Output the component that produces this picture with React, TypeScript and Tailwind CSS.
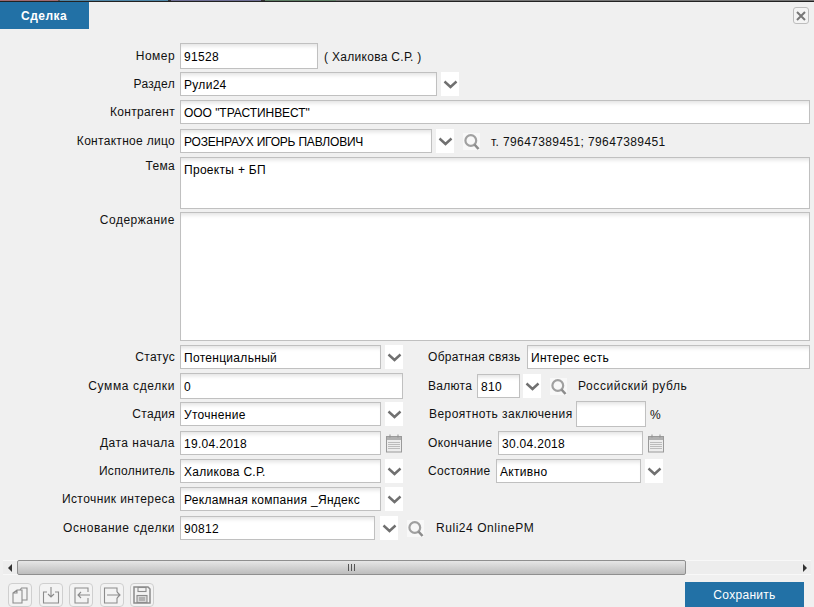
import React from "react";

const inputBase =
  "h-full border border-[#c0c0c0] bg-white shadow-[inset_0_5px_4px_-3px_#e2e2e2] pl-[3px] text-[12px] tracking-[0.3px] leading-none text-black flex items-center whitespace-nowrap overflow-hidden shrink-0";

function Field({ w, children, className = "" }: { w?: string; children?: React.ReactNode; className?: string }) {
  return (
    <div className={`${inputBase} ${w ?? ""} ${className}`}>
      <span className="relative top-[1px]">{children}</span>
    </div>
  );
}

function Chevron({ className = "" }: { className?: string }) {
  return (
    <div className={`h-full w-[18px] bg-white flex items-center justify-center shrink-0 ${className}`}>
      <svg width="15" height="9" viewBox="0 0 15 9" fill="none">
        <path d="M1.5 1.5 L7.5 7 L13.5 1.5" stroke="#707070" strokeWidth="2.4" />
      </svg>
    </div>
  );
}

function Search({ className = "" }: { className?: string }) {
  return (
    <div className={`w-[17px] h-[17px] bg-[#f8f8f8] shrink-0 ${className}`}>
      <svg width="17" height="17" viewBox="0 0 17 17" fill="none">
        <circle cx="7.8" cy="7.5" r="5.4" stroke="#a0a0a0" strokeWidth="2.2" />
        <path d="M11.5 11.5 L15.5 16" stroke="#8c8c8c" strokeWidth="2.6" />
      </svg>
    </div>
  );
}

function Calendar({ className = "" }: { className?: string }) {
  return (
    <svg className={`shrink-0 ${className}`} width="18" height="19" viewBox="0 0 18 19" fill="none">
      <rect x="1.5" y="2.5" width="15" height="15.5" fill="#ededed" stroke="#9a9a9a" />
      <rect x="2" y="3" width="14" height="3" fill="#b0b0b0" />
      <path d="M5 0.5v3M13 0.5v3" stroke="#8f8f8f" />
      <path d="M3.5 8.5h11M3.5 10.5h11M3.5 12.5h11M3.5 14.5h11" stroke="#8a8a8a" strokeDasharray="1 1" />
    </svg>
  );
}

function Label({ children, w = "w-[175px]", className = "" }: { children: React.ReactNode; w?: string; className?: string }) {
  return <div className={`${w} text-right shrink-0 whitespace-nowrap text-[12px] tracking-[0.3px] text-[#111] ${className}`}>{children}</div>;
}

function Tool({ children }: { children: React.ReactNode }) {
  return (
    <div className="w-[24px] h-[24px] border border-[#cfcfcf] rounded-[4px] bg-[#f3f3f3] flex items-center justify-center">
      <svg width="20" height="20" viewBox="0 0 20 20" fill="none" stroke="#8c8c8c" strokeWidth="1.1">
        {children}
      </svg>
    </div>
  );
}

const Note = ({ children, className = "" }: { children: React.ReactNode; className?: string }) => (
  <span className={`text-[#111] whitespace-nowrap ${className}`}>{children}</span>
);

export default function App() {
  return (
    <div className="w-[814px] h-[607px] overflow-hidden bg-[#f0f0f0] flex flex-col text-[12px] [font-family:'Liberation_Sans',Arial,sans-serif]">
      <div className="h-[2px] bg-[#222] shrink-0 flex items-start">
        <div className="h-px w-[58px] bg-[#a06a70]" />
        <div className="h-px w-[2px] bg-[#555]" />
        <div className="h-px w-[108px] bg-[#4f87a8]" />
        <div className="h-px w-[3px] bg-[#333]" />
        <div className="h-px w-[90px] bg-[#6f6f96]" />
        <div className="h-px w-[4px] bg-[#333]" />
        <div className="h-px w-[71px] bg-[#5f7f66]" />
        <div className="h-px flex-1 bg-[#777]" />
      </div>
      <div className="h-[27px] flex items-start justify-between shrink-0">
        <div className="w-[89px] h-[27px] bg-[#2271a6] text-white font-bold text-[12px] tracking-[0.5px] flex items-center pl-[21px]">Сделка</div>
        <div className="mt-[5px] mr-[5px] w-[16px] h-[17px] border border-[#bdbdbd] rounded-[3px] bg-[#f4f4f4] flex items-center justify-center">
          <svg width="10" height="10" viewBox="0 0 10 10"><path d="M1 1 L9 9 M9 1 L1 9" stroke="#777" strokeWidth="2" /></svg>
        </div>
      </div>

      <div className="flex flex-col shrink-0">
        <div className="flex items-center h-[26px] mt-[14px] gap-[5px]">
          <Label className="!tracking-[0.45px]">Номер</Label>
          <Field w="w-[138px]">91528</Field>
          <Note className="ml-[1px] relative top-[1px] tracking-[0.3px]">( Халикова С.Р. )</Note>
        </div>
        <div className="flex items-center h-[24px] mt-[3px] gap-[5px]">
          <Label>Раздел</Label>
          <Field w="w-[257px]">Рули24</Field>
          <Chevron className="-ml-[1px]" />
        </div>
        <div className="flex items-center h-[24px] mt-[4px] gap-[5px]">
          <Label>Контрагент</Label>
          <Field w="w-[630px]" className="!tracking-[-0.05px]">ООО "ТРАСТИНВЕСТ"</Field>
        </div>
        <div className="flex items-center h-[24px] mt-[5px] gap-[5px]">
          <Label>Контактное лицо</Label>
          <Field w="w-[252px]" className="!tracking-[-0.2px]">РОЗЕНРАУХ ИГОРЬ ПАВЛОВИЧ</Field>
          <Chevron className="-ml-[1px]" />
          <Search className="ml-[4px]" />
          <Note className="ml-[6px] relative top-[1px] tracking-[0.38px]">т. 79647389451; 79647389451</Note>
        </div>
        <div className="flex h-[52px] mt-[4px] gap-[5px]">
          <Label>Тема</Label>
          <Field w="w-[630px]" className="!items-start pt-[5px]">Проекты + БП</Field>
        </div>
        <div className="flex h-[129px] mt-[3px] gap-[5px]">
          <Label className="-mt-[1px] !tracking-[0.5px]">Содержание</Label>
          <Field w="w-[630px]" />
        </div>

        <div className="flex items-center h-[24px] mt-[4px] gap-[5px]">
          <Label>Статус</Label>
          <Field w="w-[201px]">Потенциальный</Field>
          <Chevron className="-ml-[1px]" />
          <Label w="w-[99px]" className="ml-[20px] !text-left">Обратная связь</Label>
          <Field w="w-[283px]" className="-ml-[5px]">Интерес есть</Field>
        </div>
        <div className="flex items-center h-[26px] mt-[4px] gap-[5px]">
          <Label className="!tracking-[0.62px]">Сумма сделки</Label>
          <Field w="w-[223px]">0</Field>
          <Label w="w-[45px]" className="ml-[20px] !text-left">Валюта</Label>
          <Field w="w-[43px] !h-[24px]" className="-ml-[1px]">810</Field>
          <Chevron className="-ml-[2px] !h-[24px]" />
          <Search className="ml-[4px]" />
          <Note className="ml-[6px] tracking-[0.6px]">Российский рубль</Note>
        </div>
        <div className="flex items-center h-[24px] mt-[3px] gap-[5px]">
          <Label>Стадия</Label>
          <Field w="w-[201px]">Уточнение</Field>
          <Chevron className="-ml-[1px]" />
          <Label w="w-[143px]" className="ml-[21px] !text-left !tracking-[0.45px]">Вероятноть заключения</Label>
          <Field w="w-[70px] !h-[26px]" className="-ml-[1px]" />
          <Note className="-ml-[1px] relative top-[1px]">%</Note>
        </div>
        <div className="flex items-center h-[24px] mt-[5px] gap-[5px]">
          <Label className="!tracking-[0.5px]">Дата начала</Label>
          <Field w="w-[201px]">19.04.2018</Field>
          <Calendar className="-ml-[1px]" />
          <Label w="w-[65px]" className="ml-[20px] !text-left !tracking-[0.4px]">Окончание</Label>
          <Field w="w-[145px]">30.04.2018</Field>
          <Calendar className="-ml-[1px]" />
        </div>
        <div className="flex items-center h-[24px] mt-[4px] gap-[5px]">
          <Label>Исполнитель</Label>
          <Field w="w-[201px]">Халикова С.Р.</Field>
          <Chevron className="-ml-[1px]" />
          <Label w="w-[63px]" className="ml-[20px] !text-left">Состояние</Label>
          <Field w="w-[145px]">Активно</Field>
          <Chevron className="-ml-[1px]" />
        </div>
        <div className="flex items-center h-[24px] mt-[4px] gap-[5px]">
          <Label className="!tracking-[0.42px]">Источник интереса</Label>
          <Field w="w-[201px]">Рекламная компания _Яндекс</Field>
          <Chevron className="-ml-[1px]" />
        </div>
        <div className="flex items-center h-[24px] mt-[5px] gap-[5px]">
          <Label className="!tracking-[0.55px]">Основание сделки</Label>
          <Field w="w-[195px]">90812</Field>
          <Chevron />
          <Search className="ml-[4px]" />
          <Note className="ml-[7px] tracking-[0.55px]">Ruli24 OnlinePM</Note>
        </div>
      </div>

      <div className="mt-[20px] h-[15px] mx-[3px] flex items-center bg-[#ededed] border-y border-[#f8f8f8] shrink-0">
        <div className="w-[14px] flex justify-center">
          <div className="w-0 h-0 border-y-[4px] border-y-transparent border-r-[4px] border-r-[#333]" />
        </div>
        <div className="w-[669px] h-[15px] rounded-[2px] border border-[#8f8f8f] bg-gradient-to-b from-[#e6e6e6] to-[#bdbdbd] flex items-center justify-center">
          <svg width="9" height="7" viewBox="0 0 9 7"><path d="M1.5 0v7M4.5 0v7M7.5 0v7" stroke="#555" /></svg>
        </div>
        <div className="flex-1 flex justify-end pr-[4px]">
          <div className="w-0 h-0 border-y-[4px] border-y-transparent border-l-[4px] border-l-[#333]" />
        </div>
      </div>

      <div className="mt-[7px] flex justify-between items-start pl-[8px] pr-[10px] shrink-0">
        <div className="flex gap-[6.5px] pt-[1px]">
          <Tool>
            <path d="M3 8 L7 5 H12 V18 H3 Z M7 5 V8 H3" />
            <path d="M10 5 L11.5 3 H17 V15 H12" />
          </Tool>
          <Tool>
            <path d="M6 7 H2.5 V18 H17.5 V7 H14" />
            <path d="M10 2 V12 M7 9 L10 12 L13 9" />
          </Tool>
          <Tool>
            <path d="M17 7 V3 H4 V18 H17 V13" />
            <path d="M19 10 H7 M10 7 L7 10 L10 13" />
          </Tool>
          <Tool>
            <path d="M15 7 V3 H2.5 V18 H15 V13" />
            <path d="M5 10 H18 M15 7 L18 10 L15 13" />
          </Tool>
          <Tool>
            <path d="M2 2 H16 L18 4 V18 H2 Z" strokeWidth="1.5" />
            <rect x="6" y="2.5" width="8" height="4" />
            <rect x="5" y="10.5" width="10" height="7" fill="#d8d8d8" />
            <path d="M7 13h6M7 15h6" />
          </Tool>
        </div>
        <div className="w-[119px] h-[25px] bg-[#2271a6] text-white text-[12px] tracking-[0.3px] flex items-center justify-center">Сохранить</div>
      </div>
    </div>
  );
}
